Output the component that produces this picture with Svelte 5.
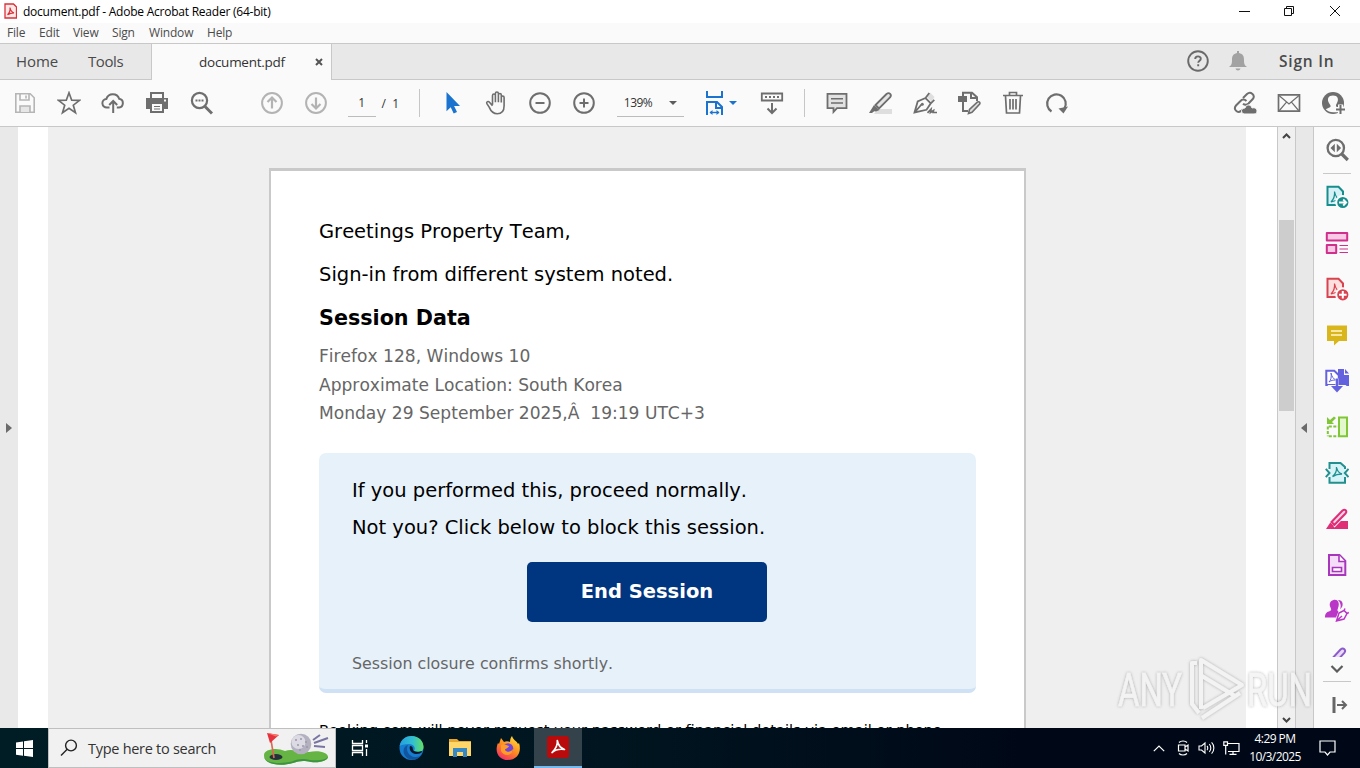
<script>
  const menus = [['File', 19], ['Edit', 21], ['View', 26], ['Sign', 24], ['Window', 45], ['Help', 25]];
  const details = ['Firefox 128, Windows 10', 'Approximate Location: South Korea', 'Monday 29 September 2025,Â\u00a0 19:19 UTC+3'];
</script>

{#snippet ico(name)}
  <svg class="ico" viewBox="0 0 24 24" fill="none" stroke="#6e6e6e" stroke-width="1.8">
    {#if name === 'save'}
      <g stroke="#b5b5b5" stroke-width="1.6"><path d="M2.8 2.8h14.4l4 4v14.4H2.8z" /><path d="M7 3v6h9V3M13 4.5v3" /><path d="M7 21v-6h10v6" fill="#e6e6e6" /></g>
    {:else if name === 'star'}
      <path d="M12 1.8l2.7 7.4 7.8.2-6.2 4.8 2.2 7.6L12 17.4l-6.5 4.4 2.2-7.6-6.2-4.8 7.8-.2z" stroke-width="1.7" />
    {:else if name === 'cloud'}
      <path d="M8.500 16.500H6a4.3 4.3 0 0 1-.6-8.600 6.700 6.700 0 0 1 12.800-.1 4.400 4.400 0 0 1-.2 8.700h-2.200M12.200 22V10.500M8.200 14l4-4 4 4" stroke-width="2" />
    {:else if name === 'print'}
      <path d="M5 1h14v6H5z" fill="#6e6e6e" stroke="none" /><path d="M7 3h10v4H7z" fill="#fafafa" stroke="none" /><path d="M1 7h22v11h-4v4H5v-4H1z" fill="#6e6e6e" stroke="none" /><path d="M7 13h10v7H7z" fill="#fafafa" stroke="none" /><path d="M9 15.5h6M9 18h6" stroke-width="1" /><path d="M19 9.5h2" stroke="#fafafa" />
    {:else if name === 'find'}
      <circle cx="10.500" cy="9.500" r="7.600" stroke-width="2.200" /><path d="M16 15.500l7 7" stroke-width="3" /><path d="M6.500 9.500h2m1 0h2m1 0h2" stroke-width="2" />
    {:else if name === 'up'}
      <g stroke="#b3b3b3" stroke-width="2"><circle cx="12" cy="12" r="9.900" /><path d="M12 17.500V7M7.500 11L12 6.500l4.500 4.500" stroke-width="2.200" /></g>
    {:else if name === 'down'}
      <g stroke="#b3b3b3" stroke-width="2"><circle cx="12" cy="12" r="9.900" /><path d="M12 6.500V17M7.500 13l4.500 4.500 4.500-4.500" stroke-width="2.200" /></g>
    {:else if name === 'pointer'}
      <path d="M6.500 1v19.300l4.200-4.100 3 6.300 3.300-1.500-2.900-6H20z" fill="#1a73cf" stroke="none" />
    {:else if name === 'hand'}
      <path d="M7.500 14V4.800c0-2.100 2.900-2.100 2.900 0V2.800c0-2.100 3-2.100 3 0v1.500c0-2 2.900-2 2.900 0v2.500c0-2 2.800-2 2.800 0V15c0 5-2.600 8-6.800 8-4.400 0-6.400-2.300-8-6.300L1.900 13c-.9-2 1.300-3 2.600-1.400l3 3.400M10.400 4.800V11.500M13.400 4V11.500M16.300 5v6.800" stroke-width="1.600" transform="translate(1 -.3)" />
    {:else if name === 'minus'}
      <circle cx="12" cy="12" r="9.800" stroke-width="2" /><path d="M7.500 12h9" stroke-width="2" />
    {:else if name === 'plus'}
      <circle cx="12" cy="12" r="9.800" stroke-width="2" /><path d="M7.500 12h9M12 7.500v9" stroke-width="2" />
    {:else if name === 'fit'}
      <g stroke="#1a73cf" stroke-width="2"><path d="M4 0v6h15V0M4 24V11h10l5 5v8M13 11v6h6" /><path d="M7 21.500h9" stroke-width="1.400" /><path d="M6.500 21.500l3-2.500v5zM16.500 21.500l-3-2.500v5z" fill="#1a73cf" stroke="none" /></g>
    {:else if name === 'ruler'}
      <path d="M1.800 2.500h20.400v7H1.800z" /><path d="M5 6h14" stroke-width="2" stroke-dasharray="2 2" /><path d="M12 12v10M7.500 17.500L12 22l4.500-4.500" stroke-width="2" />
    {:else if name === 'comment'}
      <path d="M2.500 2.800h19v14.400H12L8.500 21v-3.800h-6z" fill="#e2e2e2" /><path d="M6 7.800h12M6 12h12" stroke-width="1.400" />
    {:else if name === 'highlight'}
      <path d="M9 18h14v5H5z" fill="#dedede" stroke="none" /><path d="M6.500 14L17.500 3c2.800-2.300 5.800.6 3.500 3.500L10 17.500z" fill="#e4e4e4" /><path d="M5 14l5.500 5-3.500 1.500-1.800-.2L3 22H0z" fill="#6e6e6e" stroke="none" />
    {:else if name === 'sign'}
      <path d="M14 6l3-4.500 4.500 4.500-3 4.500z" fill="#dedede" stroke="none" /><path d="M1.500 21.500l3.200-11L12.500 7l5.300 5.300-4.300 6.500zM1.500 21.500l7-8M12.500 7l3.800-5M17.800 12.300l3.500-3.500" stroke-width="1.800" /><circle cx="9.300" cy="13.300" r="1.500" fill="#6e6e6e" stroke="none" /><path d="M14.500 21.800l3.500-3.500-.5 3.200 3-2-.4 2H24" stroke-width="1.700" />
    {:else if name === 'edit'}
      <path d="M1 5h9v6H1z" fill="#6e6e6e" stroke="none" /><path d="M6 5V1.800h9l5 4.500V10M14 2v5h6M6 11v9h5" stroke-width="2" /><path d="M11.500 22.500l1-4 8-7.500c2-.7 3 .8 2 2.300l-7.500 8z" fill="#ddd" stroke-width="1.600" />
    {:else if name === 'trash'}
      <path d="M2 4.500h20M8.500 4V1.500h7V4M4.500 5l1 17h13l1-17M9 8v10.500M12 8v10.500M15 8v10.500" stroke-width="1.700" />
    {:else if name === 'rotate'}
      <path d="M6.500 20.500A9.300 9.300 0 1 1 19.400 17.500" stroke-width="2.200" /><path d="M13.500 17.500l9.500-2-4.500 7z" fill="#6e6e6e" stroke="none" />
    {:else if name === 'link'}
      <g stroke-width="2"><path d="M10 7l4-4c3.600-3.400 9 1.500 5.800 5l-4.300 4.500c-2 1.800-4 1.500-5.500.2" /><path d="M13.500 10c-2-2-4.500-1.800-6 0L3 14.500c-3 3.600 1.200 8.300 5.200 5.400l1.500-1.500" /></g><path d="M11 23a3 3 0 0 1 1-6c1-4 6-4 7 0 3-1 5 1 5 3s-.8 3-3 3z" fill="#6e6e6e" stroke="#fafafa" stroke-width="1" />
    {:else if name === 'mail'}
      <path d="M1.500 3.800h21v16.400h-21z" stroke-width="1.700" /><path d="M2 4.500l10 8.500 10-8.500M2 20l7.500-8.800M22 20l-7.500-8.800" stroke-width="1.200" />
    {:else if name === 'person'}
      <circle cx="12" cy="12" r="11" fill="#6e6e6e" stroke="none" /><path d="M4.700 18.200l4.200-2c1.600-.8.4-2-.5-3.400C5.400 8 7.500 4.500 12 4.500s6.500 3.500 3.600 8.300c-1 1.500-.8 2.800.4 3.400l2 1v4H12c-3 0-5.500-1-7.300-3z" fill="#fafafa" stroke="none" /><path d="M19.500 13.500v10M14.500 18.500h10" stroke="#fafafa" stroke-width="5" /><path d="M19.500 14v9M15 18.500h9" stroke-width="2" />
    {/if}
  </svg>
{/snippet}

{#snippet pdfmark()}
  <path d="M9.500 6.500c1 5 3 8 6.500 8.500-4 .1-7 .8-10 2 2.500-2.500 4-6 3.500-10.500z" />
{/snippet}

{#snippet tool(name)}
  <svg class="ico" viewBox="0 0 24 24" fill="none" stroke-width="2">
    {#if name === 'search'}
      <g stroke="#6e6e6e" stroke-width="2.300"><circle cx="10.800" cy="10" r="8.200" /><path d="M16.800 16l6 6" stroke-width="3.200" /><path d="M9.800 5.800v8.400L5.500 10zM11.800 5.800v8.400L16.100 10z" fill="#6e6e6e" stroke="none" /></g>
    {:else if name === 'export'}
      <g stroke="#178e8c"><path d="M2.500 1.800h11l4.500 4.700V20H2.500z" fill="#d6f0f8" /><g stroke-width="1.200">{@render pdfmark()}</g><circle cx="17.800" cy="17.500" r="6.600" fill="#178e8c" stroke="#fafafa" /><path d="M14 17.500h7M18.200 14.500l3 3-3 3" stroke="#fff" stroke-width="1.800" /></g>
    {:else if name === 'organize'}
      <g stroke="#d12f8c"><path d="M1.800 2h20.400v7.600H1.800zM1.800 14h9.400v8H1.800z" fill="#fac9e6" stroke-linejoin="round" /><path d="M14.500 14.500H23M14.500 18H23M14.500 21.500H23" stroke-width="1.200" /></g>
    {:else if name === 'create'}
      <g stroke="#d84350"><path d="M2.500 1.800h11l4.500 4.700V20H2.500z" fill="#ffe0de" /><g stroke-width="1.200">{@render pdfmark()}</g><circle cx="17.800" cy="17.800" r="6.600" fill="#d84350" stroke="#fafafa" /><path d="M14 17.800h7.600M17.800 14v7.600" stroke="#fff" /></g>
    {:else if name === 'note'}
      <path d="M2 2.500h20V18h-8l-5 4.500V18H2z" fill="#d9b71c" /><path d="M6 8h11M6 12h11" stroke="#fff7cf" stroke-width="1.700" />
    {:else if name === 'combine'}
      <path d="M13 0h6v6h5v11H13z" fill="#6461df" /><path d="M20 0l4 4.500h-4z" fill="#6461df" /><path d="M1.300 1.800h8l4.500 4.400V16H1.300z" fill="#fff" stroke="#6461df" /><path d="M6 4c1 4 2.500 6 5 7-3 0-5 .4-7 2 2-2 2.700-5 2-9z" stroke="#6461df" stroke-width="1" /><path d="M12 9.500v10M6 17.500l6 6 6-6z" stroke="#fafafa" stroke-width="3" /><path d="M12 9.500v9" stroke="#6461df" stroke-width="2.500" /><path d="M6 17h12l-6 6.500z" fill="#6461df" />
    {:else if name === 'compress'}
      <g stroke="#80c636"><path d="M14 2.500h8v18.800h-8z" fill="#e4f8cd" /><path d="M2.800 11.500v9.800M3.800 11.500H13M3.800 21.300H13" stroke-dasharray="3 1.500" /><path d="M2 2v7h7L7 7l4-4-2-1.500-4 3.500z" fill="#80c636" stroke="none" /></g>
    {:else if name === 'redact'}
      <g stroke="#23908f"><path d="M4.500 2h11l4.500 4v15.800H4.500z" fill="#d6f3f8" stroke="none" /><path d="M4.500 8V2h11l4.500 4v2M4.500 16v5.800H20V16" /><path d="M.8 7.800L4.500 12 .8 16.200M23.500 7.800L19.800 12l3.700 4.200" /><path d="M11.500 6c.6 4 2.500 6 5.500 7-3.500 0-6.500.6-9.500 2.600C10.500 13 11.900 10 11.500 6z" stroke-width="1.300" /></g>
    {:else if name === 'prepare'}
      <path d="M9 18l4-4h10v8H5z" fill="#df2d78" /><path d="M6.500 15L17.500 3.500c2.500-2 5 .5 3 3L9.500 17.800z" fill="#ffd3e4" stroke="#fafafa" stroke-width="4" /><path d="M6.500 15L17.500 3.500c2.500-2 5 .5 3 3L9.500 17.800z" fill="#ffd3e4" stroke="#df2d78" /><path d="M5.300 15.500l3.800 3.500L5.500 22H1z" fill="#df2d78" />
    {:else if name === 'form'}
      <g stroke="#a736bd"><path d="M4 2h10.500l5.800 6v14H4z" fill="#f5dcf8" /><path d="M14 2v6.500h6M7.500 14.500h9v4h-9z" fill="#fff" stroke-width="1.600" /></g>
    {:else if name === 'certify'}
      <path d="M8.500 1c4.500-1 6 3 5 6.500-.8 3-1.800 4 0 5L11 18.500H0c0-4.500 2-5.500 5-6.500 2-1 1-2 .3-4C4 5 5 2 8.500 1z" fill="#b936c6" /><path d="M13 1c4.500-.3 5.500 4 4 7l-2 2.500c1.500-3.500.5-7-2-9.500z" fill="#b936c6" /><path d="M11.500 22l2.500-8 5-2.500 3 3-3 5.500zM12 21.500l5-4.500M19 11.500l1-2M22 14.500l1.800-1" fill="#fff" stroke="#b936c6" stroke-width="1.500" />
    {:else if name === 'more'}
      <path d="M4 17L15.500 4.500c3-2.500 6 .5 3.800 3.300L11 17" fill="#ead9fa" stroke="#8b5cc9" />
    {/if}
  </svg>
{/snippet}

<div class="screen">
  <header class="title">
    <svg width="13" height="16" viewBox="0 0 13 16" fill="none" stroke="#d9303a"><path d="M1 1h8.500l3 3v11H1z" fill="#ffe9e7" stroke-width="1.300" /><path d="M6 4.500c.6 3 1.500 4.800 4 5.300-2.500 0-4 .5-6.500 2C5.500 10 6.500 8 6 4.500z" stroke-width="1.200" /></svg>
    <span>document.pdf - Adobe Acrobat Reader (64-bit)</span>
    <svg class="winctl" width="104" height="22" viewBox="0 0 104 22" fill="none" stroke="#111"><path d="M3 10.500h11M48.500 7.500h7v7h-7zM50.500 7.500v-2h7v7h-2M94 5l10 10M104 5l-10 10" /></svg>
  </header>
  <nav class="menu">
    {#each menus as [label, w]}<span style="width:{w}px">{label}</span>{/each}
  </nav>
  <div class="tabs">
    <div class="tab home">Home</div>
    <div class="tab tools">Tools</div>
    <div class="tab doc"><span>document.pdf</span><svg width="8" height="8" viewBox="0 0 8 8" stroke="#555" stroke-width="2"><path d="M1 1l6 6M7 1L1 7" /></svg></div>
    <div class="account">
      <svg width="22" height="22" viewBox="0 0 22 22" fill="none" stroke="#6a6a6a" stroke-width="1.900"><circle cx="11" cy="11" r="9.800" /><path d="M8.200 9c0-3.500 5.600-3.500 5.600-.3 0 2-2.600 2-2.600 4.100M11.200 14.300v2" /></svg>
      <svg width="18" height="20" viewBox="0 0 18 20" fill="#a2a2a2"><path d="M8 0h2v2c4 1 5 3 5 7 0 4 .5 5 3 7H0c2.500-2 3-3 3-7 0-4 1-6 5-7zM6.500 17.500h5c-.5 2.500-4.500 2.500-5 0z" /></svg>
      <b>Sign In</b>
    </div>
  </div>
  <div class="bar">
    <div class="group wide">{#each ['save', 'star', 'cloud', 'print', 'find'] as n}<i>{@render ico(n)}</i>{/each}</div>
    <div class="group g2">{#each ['up', 'down'] as n}<i>{@render ico(n)}</i>{/each}</div>
    <div class="field page">1</div><span class="total">/&nbsp; 1</span>
    <div class="sep s1"></div>
    <div class="group g3">{#each ['pointer', 'hand', 'minus', 'plus'] as n}<i>{@render ico(n)}</i>{/each}</div>
    <div class="field zoom">139%<em class="caret"></em></div>
    <div class="fitbtn">{@render ico('fit')}<em class="caret blue"></em></div>
    <div class="ruler">{@render ico('ruler')}</div>
    <div class="sep s2"></div>
    <div class="group wide g4">{#each ['comment', 'highlight', 'sign', 'edit', 'trash', 'rotate'] as n}<i>{@render ico(n)}</i>{/each}</div>
    <div class="group wide g5">{#each ['link', 'mail', 'person'] as n}<i>{@render ico(n)}</i>{/each}</div>
  </div>

  <main>
    <div class="leftpane"><em class="tri right"></em></div>
    <div class="canvas">
      <article>
        <p class="l1">Greetings Property Team,</p>
        <p class="l2">Sign-in from different system noted.</p>
        <h3>Session Data</h3>
        <div class="details">{#each details as d}<div>{d}</div>{/each}</div>
        <section>
          <p>If you performed this, proceed normally.</p>
          <p>Not you? Click below to block this session.</p>
          <button>End Session</button>
          <small>Session closure confirms shortly.</small>
        </section>
        <footer>Booking.com will never request your password or financial details via email or phone.</footer>
      </article>
    </div>
    <div class="scroll">
      <svg width="9" height="6" viewBox="0 0 9 6" fill="none" stroke="#444" stroke-width="2"><path d="M1 5l3.500-3.500L8 5" /></svg>
      <div class="thumb"></div>
      <svg width="9" height="6" viewBox="0 0 9 6" fill="none" stroke="#444" stroke-width="2"><path d="M1 1l3.500 3.500L8 1" /></svg>
    </div>
    <div class="collapse"><em class="tri left"></em></div>
    <aside>
      <div class="first">{@render tool('search')}</div>
      <div class="list">{#each ['export', 'organize', 'create', 'note', 'combine', 'compress', 'redact', 'prepare', 'form', 'certify', 'more'] as n}<div>{@render tool(n)}</div>{/each}</div>
      <svg class="chev" width="14" height="8" viewBox="0 0 14 8" fill="none" stroke="#5c5c5c" stroke-width="2.200"><path d="M1.500 1L7 6.500 12.500 1" /></svg>
      <hr />
      <svg class="expand" width="16" height="18" viewBox="0 0 16 18" fill="none" stroke="#666" stroke-width="2"><path d="M2 1v16" stroke-width="3" /><path d="M5 9h9M10 5l4 4-4 4" /></svg>
    </aside>
  </main>

  <svg class="mark" width="204" height="70" viewBox="0 0 204 70" fill="none">
    <defs><filter id="soft" x="-10%" y="-10%" width="120%" height="120%"><feDropShadow dx="0" dy="0" stdDeviation="1.800" flood-color="#666" flood-opacity=".6" /></filter></defs>
    <g filter="url(#soft)" opacity=".85">
      <g class="marktext" fill="#f4f4f4" stroke="#f4f4f4" stroke-width=".6"><text x="3" y="53" textLength="64" lengthAdjust="spacingAndGlyphs">ANY</text><text x="132" y="53" textLength="65" lengthAdjust="spacingAndGlyphs">RUN</text></g>
      <path d="M82 10h-5v41l7 9M86 56V7l41 25-39 23M87 23l33 20M87 65l38-25" stroke="#f4f4f4" stroke-width="4" stroke-linejoin="round" />
    </g>
  </svg>

  <div class="taskbar">
    <div class="start"><svg width="17" height="17" viewBox="0 0 17 17" fill="#fff"><path d="M0 2.400l7-1v6.700H0zM8 1.200L17 0v8.100H8zM0 9h7v6.700l-7-1zM8 9h9v8l-9-1.200z" /></svg></div>
    <div class="search">
      <svg width="18" height="18" viewBox="0 0 18 18" fill="none" stroke="#222" stroke-width="1.400"><circle cx="11" cy="6.500" r="5.400" /><path d="M7.200 10.300L1 16.500" /></svg>
      <span>Type here to search</span>
      <svg class="golf" width="68" height="36" viewBox="0 0 68 36">
        <path d="M2 25c0-6 13-8 21-4 8-3 16 2 24 1 11-2 19 1 19 5s-9 6-17 5c-8-2-12-1-18 1C17 37 2 34 2 25z" fill="#66b544" /><path d="M2 26c1 8 17 8 28 5.500 7-3 11-3 18-1.500 8 1 17 0 18-4 0 5-9 7-17 6-8-2-12-1-18 1-14 4-29 1-29-7z" fill="#3d9440" />
        <ellipse cx="14" cy="27" rx="6.500" ry="3" fill="#26323b" /><path d="M8 4l4 24" stroke="#d96a52" stroke-width="1.600" /><path d="M5 3l12 2-9 8z" fill="#e5333d" /><path d="M5 3l12 2-3 1.500z" fill="#ff7668" />
        <circle cx="39" cy="14" r="10.300" fill="#b3b1bf" /><circle cx="36.500" cy="12" r="7" fill="#dcdbe3" /><g fill="#9a98aa"><circle cx="34" cy="10" r="1" /><circle cx="39" cy="9" r="1" /><circle cx="44" cy="12" r="1" /><circle cx="36" cy="15" r="1" /><circle cx="41" cy="16" r="1" /><circle cx="38" cy="20" r="1" /><circle cx="45" cy="17" r="1" /></g>
        <path d="M51 10l7-5M52 13l14-5M52 16l11 1" stroke="#7775a3" stroke-width="2" />
      </svg>
    </div>
    <div class="app"><svg width="18" height="16" viewBox="0 0 18 16" fill="none" stroke="#fff" stroke-width="1.300"><path d="M1.500 0v3.500h10V0M1.500 5.500h10v5h-10zM1.500 16v-3.500h10V16M15.500 0v3M15.500 9v7" /><path d="M14 4.500h3v3h-3z" fill="#fff" stroke="none" /></svg></div>
    <div class="app a2"><svg width="25" height="24" viewBox="0 0 25 24"><defs><linearGradient id="e1" x1="0" x2="1"><stop stop-color="#249fe0" /><stop offset=".55" stop-color="#32bfd0" /><stop offset="1" stop-color="#65df61" /></linearGradient></defs><circle cx="12.500" cy="12" r="12" fill="#167ccf" /><path d="M.6 10C2 3 7 0 12.500 0 20 0 24.500 5 24.500 11c0 5-6 7-9.500 4 2-3 0-7-5-7C5 8 2 9 .6 10z" fill="url(#e1)" /><path d="M9 9c-3 5 1 12 8 12 2 0 4-1 5-2-4 6-11 6-15 2C3 17 4 10 9 9z" fill="#12559f" /><path d="M11 10c-1.500 4 2 8 6 8 3 0 5-1 6-2 1-2-4 1-8-1-2-1 0-5-4-5z" fill="#06142a" /></svg></div>
    <div class="app a3"><svg width="23" height="20" viewBox="0 0 23 20"><path d="M0 1h8l2 2h12v4H0z" fill="#e6a62d" /><path d="M0 4h22v14H0z" fill="#ffd667" /><path d="M4 10h14v9h-4v-5H8v5H4z" fill="#3588c6" /></svg></div>
    <div class="app a4"><svg width="24" height="24" viewBox="0 0 24 24"><defs><linearGradient id="f1" x1=".8" y1="0" x2=".2" y2="1"><stop stop-color="#ffe03c" /><stop offset=".5" stop-color="#ff8a21" /><stop offset="1" stop-color="#f22968" /></linearGradient></defs><path d="M5 2l3 4c2-1 4-1 6 0 0-3 1-5 2-6 1 4 5 5 6 8l1-1c3 9-2 17-11 17S-2 16 2 7l1 1z" fill="url(#f1)" /><circle cx="12" cy="12.500" r="5.300" fill="#7147d9" /><path d="M5 9c3-2 5 0 8 1-1 3-4 2-4 4 2 3 6 2 8-1 0 7-9 8-12 2z" fill="#ff9c28" /></svg></div>
    <div class="app active"><svg width="22" height="22" viewBox="0 0 22 22"><rect width="22" height="22" rx="2.500" fill="#b90b0b" /><path d="M10.300 4.500c.8 4.500 3 7.500 7.200 9-5-.8-9 0-12.500 3 3.500-3.500 6-7.500 5.300-12z" fill="none" stroke="#fff" stroke-width="1.700" stroke-linejoin="round" /></svg></div>
    <div class="tray">
      <svg width="12" height="7" viewBox="0 0 12 7" fill="none" stroke="#fff" stroke-width="1.200"><path d="M.8 6.200L6 1l5.200 5.200" /></svg>
      <svg class="t2" width="13" height="16" viewBox="0 0 13 16" fill="none" stroke="#fff" stroke-width="1.200"><path d="M1.500 5h6.500v6H1.500zM8 7l3-2v6L8 9M2 2.500C4 .5 8 .5 10 2.500M2 13.500c2 2 6 2 8 0" /></svg>
      <svg class="t3" width="17" height="14" viewBox="0 0 17 14" fill="none" stroke="#fff" stroke-width="1.100"><path d="M1 5h2.500L7 2v10L3.500 9H1zM9 5c1 1 1 3 0 4M11.300 3.200c2 2 2 5.600 0 7.600M13.600 1.400c3 3 3 8.200 0 11.200" /></svg>
      <svg class="t4" width="17" height="14" viewBox="0 0 17 14" fill="none" stroke="#fff" stroke-width="1.200"><path d="M4.500 2.500h11.500v8H5M10 10.500v3M6.500 13.300h7M.8.8h3.700v3.500H.8zM2.700 4.500v9" /></svg>
      <div class="clock"><div class="time">4:29 PM</div><div class="date">10/3/2025</div></div>
      <svg class="t5" width="17" height="16" viewBox="0 0 17 16" fill="none" stroke="#fff" stroke-width="1.200"><path d="M1 1h15v11h-5l-2.500 3L6 12H1z" /></svg>
    </div>
  </div>
</div>

<style>
  :global(body) { margin: 0; overflow: hidden; }
  .screen { position: relative; width: 1360px; height: 768px; display: flex; flex-direction: column; overflow: hidden; background: #fff; font-family: "Open Sans", "Noto Sans", sans-serif; font-size: 12px; color: #444; }
  svg { display: block; flex: none; }
  em, i { font-style: normal; }
  .title { height: 23px; display: flex; align-items: center; padding: 0 20px 0 4px; color: #000; }
  .title span { margin-left: 6px; font-size: 12px; letter-spacing: -0.23px; white-space: nowrap; }
  .title svg:first-child { margin-top: -2px; }
  .winctl { margin-left: auto; }
  .menu { box-sizing: border-box; height: 21px; display: flex; gap: 13px; padding: 0 0 2px 7px; align-items: center; background: #fafafa; color: #4b4b4b; border-bottom: 1px solid #c8c8c8; letter-spacing: -0.18px; }
  .menu span { white-space: nowrap; }
  .tabs { height: 35px; display: flex; background: #e8e8e8; border-bottom: 1px solid #c8c8c8; font-size: 15px; align-items: center; color: #4a4a4a; }
  .tab { white-space: nowrap; }
  .home { padding: 0 0 2px 16px; width: 72px; letter-spacing: -0.1px; }
  .tools { width: 63px; letter-spacing: -0.4px; padding-bottom: 2px; }
  .doc { box-sizing: border-box; width: 181px; height: 36px; margin-bottom: -1px; background: #fafafa; border: solid #c8c8c8; border-width: 0 1px; display: flex; align-items: center; padding: 0 8px 0 47px; justify-content: space-between; font-size: 13.500px; letter-spacing: -0.25px; color: #333; }
  .account { margin-left: auto; display: flex; align-items: center; padding: 0 25px 2px 0; }
  .account svg + svg { margin-left: 20px; }
  .account b { margin-left: 32px; font-weight: 600; font-size: 15.500px; letter-spacing: 0.8px; width: 56px; white-space: nowrap; }
  .bar { height: 46px; flex: none; display: flex; align-items: center; background: #fafafa; border-bottom: 1px solid #c8c8c8; padding-left: 3px; color: #333; }
  .group { display: flex; }
  .group i { width: 43.800px; display: flex; justify-content: center; }
  .wide i { width: 44px; }
  .ico { width: 24px; height: 24px; }
  .g2 { margin-left: 27px; }
  .field { box-sizing: border-box; height: 27px; border-bottom: 1px solid #bcbcbc; line-height: 25px; }
  .page { width: 28px; margin-left: 10px; text-align: center; }
  .total { margin-left: 6px; width: 20px; white-space: nowrap; }
  .sep { width: 1px; height: 28px; background: #c6c6c6; }
  .s1 { margin-left: 17px; }
  .g3 { margin-left: 11px; }
  .zoom { width: 67px; margin-left: 11px; padding: 0 7px; display: flex; justify-content: space-between; align-items: center; letter-spacing: -0.5px; }
  .caret { border: 4px solid transparent; border-top: 4.500px solid #5c5c5c; border-bottom: 0; }
  .fitbtn { display: flex; align-items: center; margin-left: 19px; width: 36px; }
  .blue { border-top-color: #1a73cf; margin-left: 2px; }
  .ruler { margin-left: 21px; }
  .s2 { margin-left: 20px; }
  .g4 { margin-left: 10px; }
  .g5 { margin-left: auto; margin-right: 5px; }
  main { height: 601px; flex: none; display: flex; }
  .leftpane { width: 18px; background: #e9e9e9; display: flex; align-items: center; }
  .tri { border: 5px solid transparent; }
  .right { border-left: 6px solid #6b6b6b; border-right: 0; margin-left: 6px; }
  .left { border-right: 6px solid #6b6b6b; border-left: 0; margin-left: 5px; }
  .canvas { width: 1198px; border: solid #fff; border-width: 0 31px 0 30px; background: #efefef; overflow: hidden; }
  article { box-sizing: border-box; width: 757px; height: 640px; margin: 41px 0 0 221px; background: #fff; border: 2px solid #c9c9c9; border-top-width: 3px; padding: 39px 48px 0; font-family: "DejaVu Sans", sans-serif; font-size: 19.500px; color: #000; font-kerning: none; }
  p, h3 { margin: 0; white-space: nowrap; }
  .l1, .l2 { height: 43px; line-height: 43px; }
  h3 { font-size: 20.700px; height: 44px; line-height: 44px; }
  .details { margin-top: 2px; font-size: 17.080px; line-height: 28.500px; color: #666; white-space: pre; }
  section { box-sizing: border-box; width: 657px; height: 240px; margin-top: 25px; padding: 19px 34px 0 33px; background: #e7f1fa; border-bottom: 4px solid #cfe1f5; border-radius: 7px; display: flex; flex-direction: column; }
  section p { height: 37px; line-height: 38px; }
  button { width: 240px; height: 60px; flex: none; align-self: center; margin-top: 16px; padding: 0; border: 0; border-radius: 5px; background: #003580; color: #fff; font: bold 19.500px "DejaVu Sans", sans-serif; }
  small { margin-top: 31px; font-size: 15.850px; line-height: 22px; color: #666; }
  footer { margin-top: 26px; font-size: 14.620px; line-height: 22px; white-space: nowrap; }
  .scroll { box-sizing: border-box; width: 19px; border: solid #c8c8c8; border-width: 0 1px; background: #f0f0f0; display: flex; flex-direction: column; align-items: center; padding: 6px 0 5px; }
  .thumb { width: 15px; height: 191px; background: #cdcdcd; margin: 81px 0 auto; }
  .collapse { box-sizing: border-box; width: 18px; background: #e8e8e8; border-right: 1px solid #c8c8c8; display: flex; align-items: center; }
  aside { width: 46px; background: #fafafa; display: flex; flex-direction: column; align-items: center; }
  .first { box-sizing: border-box; width: 28px; height: 47px; border-bottom: 1px solid #c8c8c8; padding: 11px 2px 0; }
  .list { height: 483px; padding-top: 11px; box-sizing: border-box; overflow: hidden; }
  .list div { height: 46.050px; }
  .chev { margin-top: 8px; }
  hr { width: 28px; height: 1px; margin: 8px 0 14px; border: 0; background: #c8c8c8; }
  .expand { margin-left: 6px; }
  .mark { position: absolute; left: 1115px; top: 653px; }
  .marktext { font: 46px "Roboto", sans-serif; }
  .taskbar { height: 40px; flex: none; display: flex; background: linear-gradient(90deg, #001c24, #00151f 45%, #000817 75%, #000817); color: #fff; z-index: 1; }
  .start { width: 48px; display: flex; align-items: center; justify-content: center; }
  .search { box-sizing: border-box; width: 288px; background: #f1f1f1; border: 1px solid #bfbfbf; display: flex; align-items: center; padding-left: 11px; color: #333; font-size: 14.500px; }
  .search span { margin-left: 10px; white-space: nowrap; letter-spacing: -0.28px; }
  .golf { margin-left: auto; margin-right: 5px; }
  .app { width: 48px; display: flex; align-items: center; justify-content: center; }
  .a2 { width: 54px; }
  .a3 { width: 44px; }
  .a4 { width: 52px; }
  .active { box-sizing: border-box; background: #34434b; border-bottom: 2px solid #76b9ed; }
  .tray { margin-left: auto; display: flex; align-items: center; width: 207px; }
  .t2 { margin-left: 12px; }
  .t3 { margin-left: 8px; }
  .t4 { margin-left: 8px; }
  .t5 { margin-left: 18px; }
  .clock { margin-left: 9px; width: 52px; text-align: center; font-size: 12px; line-height: 18px; letter-spacing: -0.55px; white-space: nowrap; }
  .date { letter-spacing: -0.6px; }
</style>
